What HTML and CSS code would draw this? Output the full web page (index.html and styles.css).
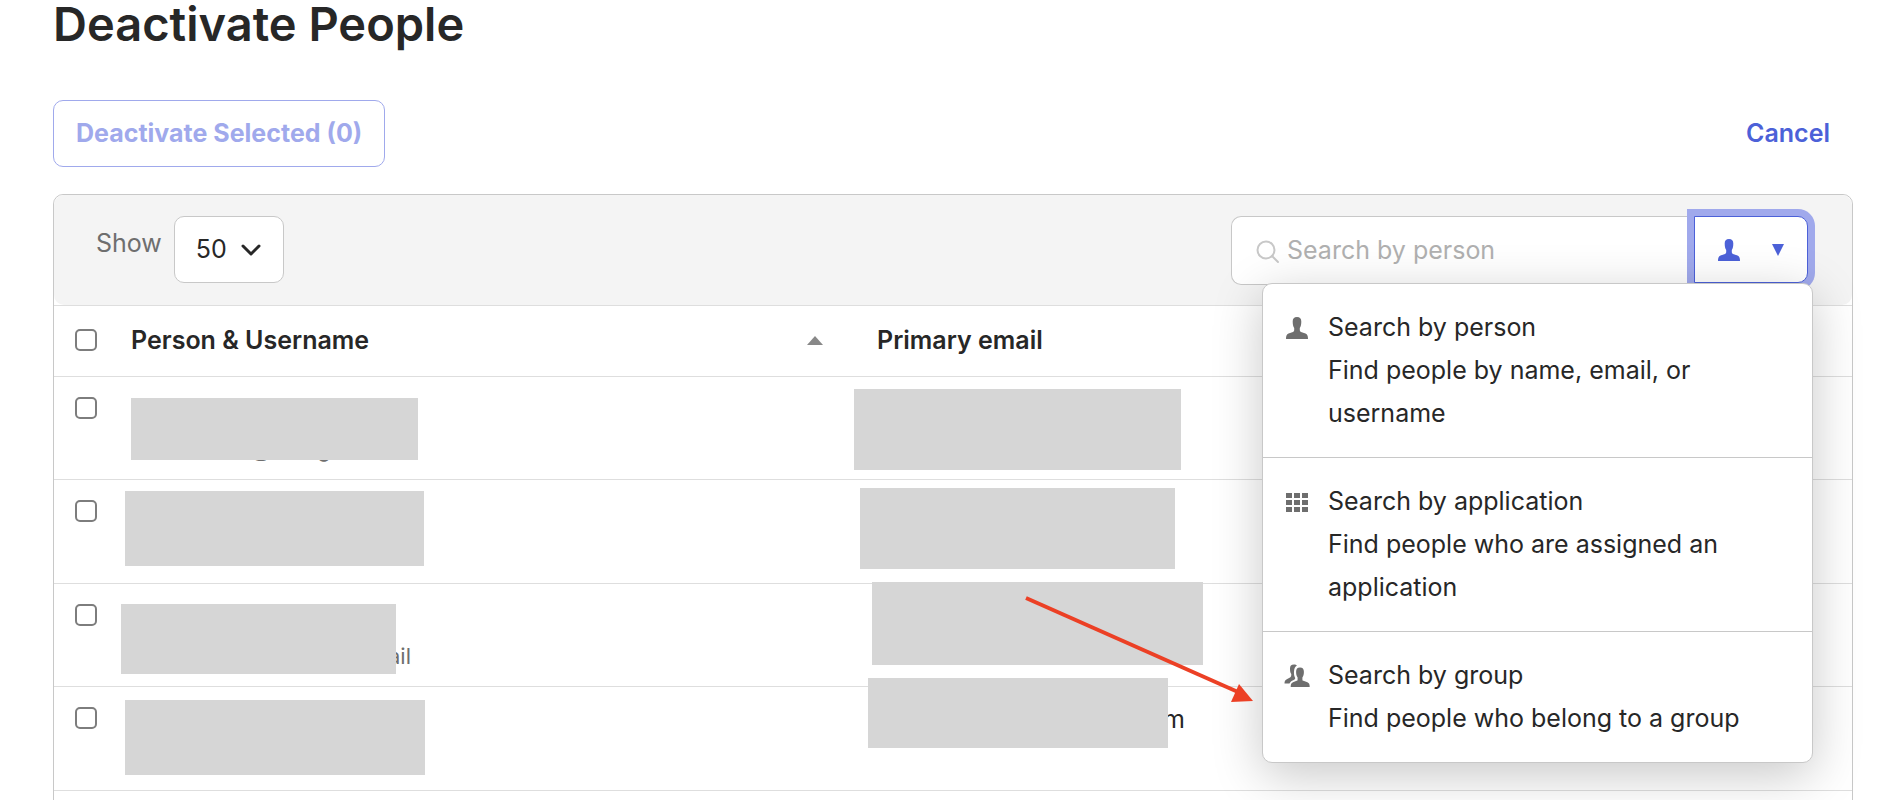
FILE: index.html
```html
<!DOCTYPE html>
<html lang="en">
<head>
  <meta charset="UTF-8" />
  <meta name="viewport" content="width=device-width, initial-scale=1.0" />
  <title>Deactivate People</title>
  <link rel="stylesheet" href="styles.css">
</head>
<body>

  <main class="page">
    <h1>Deactivate People</h1>

    <div class="actions">
      <button type="button" class="btn-deactivate" disabled>Deactivate Selected (0)</button>
      <a href="#" class="cancel-link">Cancel</a>
    </div>

    <section class="panel">
      <div class="toolbar">
        <div class="page-size">
          <label for="pageSize">Show</label>
          <div class="select-wrap">
            <select id="pageSize">
              <option>50</option>
              <option>100</option>
            </select>
            <svg class="chevron" viewBox="0 0 20 12" aria-hidden="true"><path d="M2 2l8 8 8-8" /></svg>
          </div>
        </div>

        <div class="search">
          <svg class="search-icon" viewBox="0 0 24 24" aria-hidden="true">
            <circle cx="10" cy="10" r="8.5" />
            <path d="M16 16l6 6" />
          </svg>
          <input type="text" class="search-input" placeholder="Search by person" aria-label="Search by person" />
          <button type="button" class="search-type" aria-label="Search type" aria-expanded="true">
            <svg class="icon" viewBox="0 0 22 22" aria-hidden="true"><use href="#person" /></svg>
            <svg class="caret" viewBox="0 0 12 12" aria-hidden="true"><path d="M0 0h12L6 12z" /></svg>
          </button>

          <ul class="search-menu">
            <li>
              <button type="button" class="menu-item">
                <svg class="icon" viewBox="0 0 22 22" aria-hidden="true">
                  <path id="person" d="M11 0C8 0 6.700 1.500 6.700 4.500c0 2.800.4 5 1.500 6.500v2.300c0 .8-.4 1.300-1.200 1.600L2.500 16.600C.6 17.400 0 19.100 0 22h22c0-2.900-.6-4.600-2.500-5.400L15 14.900c-.8-.3-1.200-.8-1.200-1.600V11c1.100-1.500 1.500-3.700 1.500-6.500C15.300 1.500 14 0 11 0z" />
                </svg>
                <span>Search by person<br>Find people by name, email, or username</span>
              </button>
            </li>
            <li>
              <button type="button" class="menu-item">
                <svg class="icon" viewBox="0 0 22 22" aria-hidden="true">
                  <path d="M0 2h6v5H0zM8 2h6v5H8zM16 2h6v5h-6zM0 9h6v5H0zM8 9h6v5H8zM16 9h6v5h-6zM0 16h6v5H0zM8 16h6v5H8zM16 16h6v5h-6z" />
                </svg>
                <span>Search by application<br>Find people who are assigned an application</span>
              </button>
            </li>
            <li>
              <button type="button" class="menu-item">
                <svg class="icon" viewBox="0 0 22 22" aria-hidden="true">
                  <path d="M8-.5C5 -.5 4 1 4 3.500c0 2.400.3 4.200 1.300 5.500 0 2-.2 2.800-1.300 3.500L.8 14.300C-.8 15.100-1.500 16.200-1.500 18.500h5c.7-1.700 2-2.600 3.700-3.300 1.500-.6 2-1.200 2-2.200C8.200 11.300 7.800 9 8 6.500 8.200 3.600 9 1.700 11 .6 10.400-.1 9.400-.5 8-.5z" />
                  <path d="M14 2.500c-2.700 0-3.900 1.500-3.900 4.200 0 2.500.4 4.300 1.500 5.700v2c0 .8-.3 1.100-1 1.400L7 17.300C5.300 18 4.700 19.300 4.700 22h19c0-2.700-.6-4-2.300-4.700l-4-1.500c-.7-.3-1-.6-1-1.400v-2c1.100-1.400 1.500-3.200 1.500-5.700 0-2.700-1.200-4.200-3.900-4.200z" />
                </svg>
                <span>Search by group<br>Find people who belong to a group</span>
              </button>
            </li>
          </ul>
        </div>
      </div>

      <table class="people">
        <thead>
          <tr>
            <th class="col-check"><input type="checkbox" aria-label="Select all people" /></th>
            <th class="col-person">
              <div class="sortable">
                Person &amp; Username
                <svg class="sort-arrow" viewBox="0 0 16 9" aria-hidden="true"><path d="M8 0l8 9H0z" /></svg>
              </div>
            </th>
            <th>Primary email</th>
          </tr>
        </thead>
        <tbody>
          <tr>
            <td><input type="checkbox" aria-label="Select person 1" /></td>
            <td>
              <div class="username name-one"><span>@</span><span>g</span></div>
              <div class="mask mask-person-1"></div>
            </td>
            <td><div class="mask mask-email-1"></div></td>
          </tr>
          <tr>
            <td><input type="checkbox" aria-label="Select person 2" /></td>
            <td><div class="mask mask-person-2"></div></td>
            <td><div class="mask mask-email-2"></div></td>
          </tr>
          <tr>
            <td><input type="checkbox" aria-label="Select person 3" /></td>
            <td>
              <div class="username name-three">ail</div>
              <div class="mask mask-person-3"></div>
            </td>
            <td><div class="mask mask-email-3"></div></td>
          </tr>
          <tr>
            <td><input type="checkbox" aria-label="Select person 4" /></td>
            <td><div class="mask mask-person-4"></div></td>
            <td>
              <div class="email">m</div>
              <div class="mask mask-email-4"></div>
            </td>
          </tr>
          <tr>
            <td><input type="checkbox" aria-label="Select person 5" /></td>
            <td></td>
            <td></td>
          </tr>
        </tbody>
      </table>

      <!-- arrow pointing at the group option -->
      <svg class="pointer" viewBox="0 0 230 106" aria-hidden="true">
        <path class="pointer-line" d="M1 2l212 94" />
        <path class="pointer-head" d="M228 105l-22 1 8-18z" />
      </svg>
    </section>
  </main>

</body>
</html>
```

FILE: styles.css
```css
* {
  box-sizing: border-box;
}

body {
  font-family: Inter, "Liberation Sans", sans-serif;
  font-size: 25px;
  color: #272727;
  background-color: #ffffff;
  margin: 0;
}

button,
input,
select {
  font: inherit;
  color: inherit;
}

.page {
  height: 100vh;
  overflow: hidden;
  padding: 0 35px 0 53px;
}

h1 {
  margin: 0 0 52px;
  font-size: 47px;
  font-weight: 600;
  line-height: 48px;
}

.actions {
  display: flex;
  justify-content: space-between;
  align-items: center;
  margin-bottom: 27px;
}

.btn-deactivate {
  height: 67px;
  padding: 0 22px 2px;
  border: 1px solid #a0a9ec;
  border-radius: 10px;
  background-color: #ffffff;
  color: #a0a9ec;
  font-weight: 700;
}

.cancel-link {
  padding: 0 23px 2px 0;
  color: #4c61d8;
  font-weight: 600;
  text-decoration: none;
}

.panel {
  position: relative;
  border: 1px solid #c8c8c8;
  border-radius: 10px;
}

.toolbar {
  display: flex;
  justify-content: space-between;
  align-items: flex-start;
  height: 110px;
  padding: 21px 44px 0 42px;
  background-color: #f4f4f4;
  border-radius: 10px;
}

.page-size {
  display: flex;
  gap: 12px;
  color: #6e6e6e;
  line-height: 54px;
}

.select-wrap {
  position: relative;
}

.select-wrap select {
  appearance: none;
  width: 110px;
  height: 67px;
  padding: 0 21px 2px;
  border: 1px solid #c8c8c8;
  border-radius: 10px;
  background-color: #ffffff;
  color: #272727;
}

.chevron {
  position: absolute;
  top: 28px;
  right: 23px;
  width: 20px;
  height: 12px;
  fill: none;
  stroke: #272727;
  stroke-width: 3;
  stroke-linecap: round;
  stroke-linejoin: round;
  pointer-events: none;
}

.search {
  position: relative;
  display: flex;
  width: 577px;
}

.search-input {
  flex: 1;
  min-width: 0;
  height: 69px;
  padding: 0 20px 2px 55px;
  border: 1px solid #c8c8c8;
  border-right: 0;
  border-radius: 10px 0 0 10px;
  background-color: #ffffff;
}

.search-input::placeholder {
  color: #b0b0b0;
  opacity: 1;
}

.search-icon {
  position: absolute;
  top: 24px;
  left: 25px;
  width: 24px;
  height: 24px;
  fill: none;
  stroke: #c8c8c8;
  stroke-width: 2;
  stroke-linecap: round;
}

.search-type {
  position: relative;
  display: flex;
  align-items: center;
  justify-content: space-between;
  width: 114px;
  height: 67px;
  padding: 0 23px;
  border: 1px solid #4c61d8;
  border-radius: 0 10px 10px 0;
  background-color: #ffffff;
  box-shadow: 0 0 0 7px #a0a9ec;
}

.search-type svg {
  fill: #4c61d8;
}

.icon {
  flex: none;
  width: 22px;
  height: 22px;
  fill: #6e6e6e;
  overflow: visible;
}

.caret {
  width: 12px;
  height: 12px;
}

.search-menu {
  position: absolute;
  top: 67px;
  right: -5px;
  z-index: 2;
  width: 551px;
  margin: 0;
  padding: 0;
  list-style: none;
  background-color: #ffffff;
  border: 1px solid #c8c8c8;
  border-radius: 10px;
  box-shadow: 0 12px 50px rgba(0, 0, 0, 0.22);
}

.search-menu li + li {
  border-top: 1px solid #c8c8c8;
}

.menu-item {
  display: flex;
  gap: 20px;
  width: 100%;
  padding: 22px 20px 22px 23px;
  border: 0;
  background: none;
  line-height: 43px;
  text-align: left;
}

.menu-item .icon {
  margin-top: 11px;
}

.people {
  width: 100%;
  table-layout: fixed;
  border-spacing: 0;
}

.people th,
.people td {
  position: relative;
  padding: 0;
  border-bottom: 1px solid #dedede;
  text-align: left;
  vertical-align: top;
}

.people th {
  height: 72px;
  padding-bottom: 2px;
  border-top: 1px solid #dedede;
  font-weight: 600;
  vertical-align: middle;
}

.people td {
  height: 103px;
}

.people tr:nth-child(even) td {
  height: 104px;
}

.col-check {
  width: 77px;
}

.col-person {
  width: 746px;
}

.sortable {
  display: flex;
  align-items: center;
  justify-content: space-between;
  padding-right: 54px;
}

.sort-arrow {
  width: 16px;
  height: 9px;
  fill: #888888;
}

.people input {
  appearance: none;
  display: block;
  width: 22px;
  height: 22px;
  margin: 20px 0 0 21px;
  border: 2px solid #7d7d7d;
  border-radius: 5px;
  background-color: #ffffff;
}

.people th input {
  margin-top: 0;
}

.username {
  padding-top: 56px;
  color: #6e6e6e;
  font-size: 22px;
  line-height: 32px;
}

.name-one {
  display: flex;
  gap: 46px;
  padding-left: 119px;
}

.name-three {
  padding-left: 257px;
}

.email {
  padding: 16px 0 0 286px;
  line-height: 32px;
}

/* grey blocks hiding personal data */
.mask {
  position: absolute;
  background-color: #d6d6d6;
}

.mask-person-1 {
  top: 21px;
  left: 0;
  width: 287px;
  height: 62px;
}

.mask-person-2 {
  top: 11px;
  left: -6px;
  width: 299px;
  height: 75px;
}

.mask-person-3 {
  top: 20px;
  left: -10px;
  width: 275px;
  height: 70px;
}

.mask-person-4 {
  top: 13px;
  left: -6px;
  width: 300px;
  height: 75px;
}

.mask-email-1 {
  top: 12px;
  left: -23px;
  width: 327px;
  height: 81px;
}

.mask-email-2 {
  top: 8px;
  left: -17px;
  width: 315px;
  height: 81px;
}

.mask-email-3 {
  top: -2px;
  left: -5px;
  width: 331px;
  height: 83px;
}

.mask-email-4 {
  top: -9px;
  left: -9px;
  width: 300px;
  height: 70px;
}

.pointer {
  position: absolute;
  top: 401px;
  left: 971px;
  z-index: 3;
  width: 230px;
  height: 106px;
}

.pointer-line {
  fill: none;
  stroke: #ec4025;
  stroke-width: 4;
}

.pointer-head {
  fill: #ec4025;
}
```
